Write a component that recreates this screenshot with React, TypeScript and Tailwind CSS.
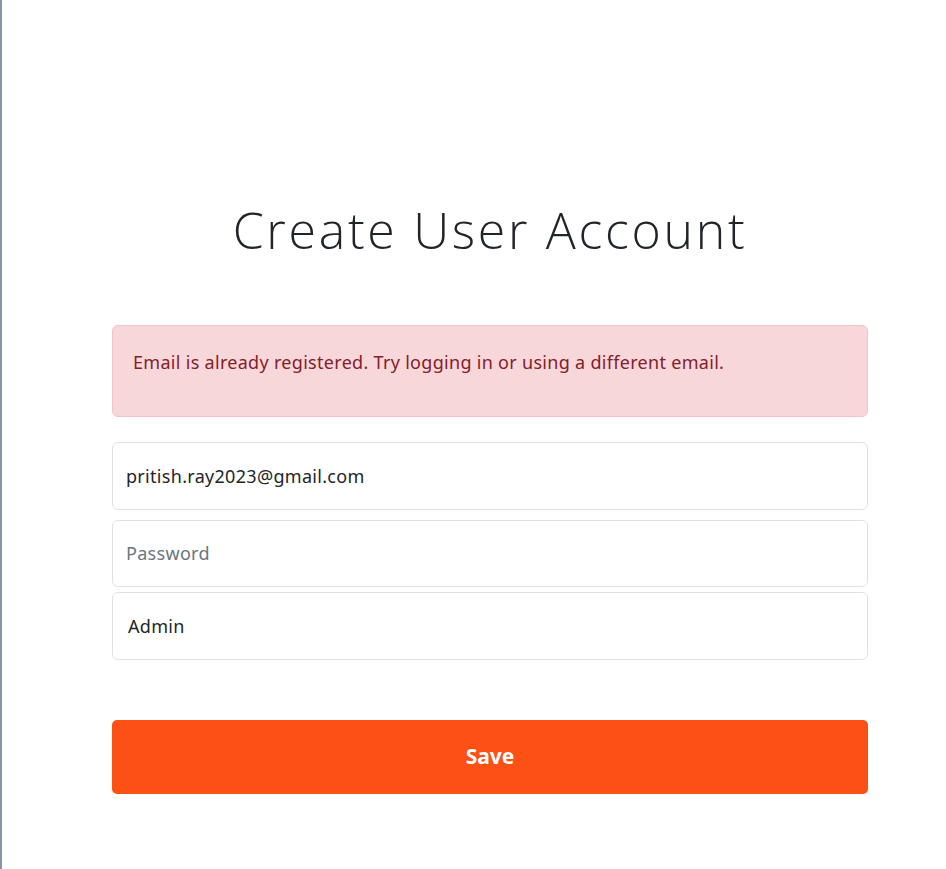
import React from "react";

export default function App() {
  return (
    <div className="min-h-[869px] w-[946px] bg-white border-l-2 border-[#8595a8]">
      <div className="ml-[110px] w-[756px] pt-[200px] font-['Noto_Sans',sans-serif]">
        <h1 className="text-center text-[50px] leading-[60px] font-light text-[#212529] tracking-[2.7px] font-['Open_Sans',sans-serif]">
          Create User Account
        </h1>
        <div className="mt-[65px] h-[92px] rounded-[6px] border border-[#f5c2c7] bg-[#f8d7da] text-[#842029] pl-[20px] pr-4 pt-[24px] text-[18px] leading-[24px] tracking-[0.3px]">
          Email is already registered. Try logging in or using a different email.
        </div>
        <div className="mt-[25px] flex flex-col text-[18px] tracking-[0.3px]">
          <div className="h-[68px] rounded-[6px] border border-[#dee2e6] flex items-center pl-[13px] text-[#212529]">
            pritish.ray2023@gmail.com
          </div>
          <div className="mt-[10px] h-[67px] rounded-[6px] border border-[#dee2e6] flex items-center pl-[13px] text-[#6c757d]">
            Password
          </div>
          <div className="mt-[5px] h-[68px] rounded-[6px] border border-[#dee2e6] flex items-center pl-[15px] text-[#212529]">
            Admin
          </div>
        </div>
        <button className="mt-[60px] w-full h-[74px] rounded-[5px] bg-[#fd5015] text-white font-bold text-[21px]">
          Save
        </button>
      </div>
    </div>
  );
}
